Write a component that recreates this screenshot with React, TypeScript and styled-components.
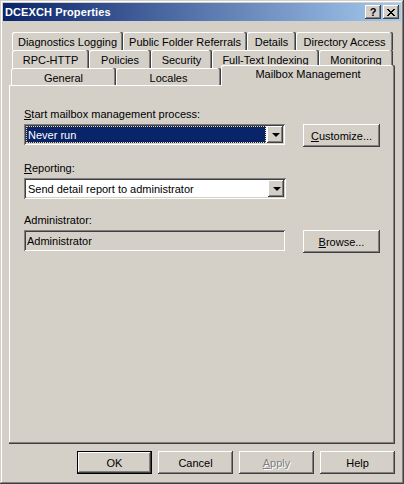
import React from "react";
import styled, { createGlobalStyle, css } from "styled-components";

const face = "#D4D0C8";
const shadow = "#808080";
const darkShadow = "#404040";
const highlight = "#0A246A";

const GlobalStyle = createGlobalStyle`
  html, body {
    margin: 0;
    padding: 0;
    background: ${face};
  }
  body {
    font-family: "Liberation Sans", Arial, sans-serif;
    font-size: 11px;
    color: #000;
  }
  * {
    box-sizing: border-box;
  }
`;

const raised = css`
  box-shadow: inset -1px -1px ${darkShadow}, inset 1px 1px #fff,
    inset -2px -2px ${shadow}, inset 2px 2px ${face};
`;

const sunken = css`
  box-shadow: inset 1px 1px ${shadow}, inset -1px -1px #fff,
    inset 2px 2px ${darkShadow}, inset -2px -2px ${face};
`;

const rowsOfTabs: { label: string; width: number }[][] = [
  [
    { label: "Diagnostics Logging", width: 111 },
    { label: "Public Folder Referrals", width: 124 },
    { label: "Details", width: 49 },
    { label: "Directory Access", width: 97 }
  ],
  [
    { label: "RPC-HTTP", width: 77 },
    { label: "Policies", width: 62 },
    { label: "Security", width: 61 },
    { label: "Full-Text Indexing", width: 107 },
    { label: "Monitoring", width: 74 }
  ],
  [
    { label: "General", width: 105 },
    { label: "Locales", width: 105 },
    { label: "Mailbox Management", width: 174 }
  ]
];

const App: React.FC = () => {
  return (
    <>
      <GlobalStyle />
      <Window>
        <TitleBar>
          <Title>DCEXCH Properties</Title>
          <CaptionButtons>
            <CaptionButton>
              <HelpGlyph>?</HelpGlyph>
            </CaptionButton>
            <CaptionButton>
              <svg width="8" height="7" viewBox="0 0 8 7">
                <path
                  d="M0 0h2v1h1v1h2V1h1V0h2v1H7v1H6v1H5v1h1v1h1v1h1v1H6V6H5V5H3v1H2v1H0V6h1V5h1V4h1V3H2V2H1V1H0z"
                  fill="#000"
                />
              </svg>
            </CaptionButton>
          </CaptionButtons>
        </TitleBar>

        <Body>
          <Tabs>
            {rowsOfTabs.map((row, r) => (
              <TabRow key={r} $indent={r === 2 ? 2 : 3} $height={r === 2 ? 17 : 18}>
                {row.map(tab => (
                  <Tab
                    key={tab.label}
                    $width={tab.width}
                    $selected={tab.label === "Mailbox Management"}
                  >
                    {tab.label}
                  </Tab>
                ))}
              </TabRow>
            ))}
          </Tabs>

          <Panel>
            <Field>
              <Label>
                <Key>S</Key>tart mailbox management process:
              </Label>
              <ControlRow>
                <Combo>
                  <ComboValue $focused>
                    <FocusText>Never run</FocusText>
                  </ComboValue>
                  <DropButton>
                    <Arrow />
                  </DropButton>
                </Combo>
                <Button>
                  <Key>C</Key>ustomize...
                </Button>
              </ControlRow>
            </Field>

            <Field>
              <Label>
                <Key>R</Key>eporting:
              </Label>
              <ControlRow>
                <Combo>
                  <ComboValue>Send detail report to administrator</ComboValue>
                  <DropButton>
                    <Arrow />
                  </DropButton>
                </Combo>
              </ControlRow>
            </Field>

            <Field>
              <Label>Administrator:</Label>
              <ControlRow>
                <TextBox>Administrator</TextBox>
                <Button>
                  <Key>B</Key>rowse...
                </Button>
              </ControlRow>
            </Field>
          </Panel>

          <ButtonBar>
            <Button $default $width={75}>
              OK
            </Button>
            <Button $width={75}>Cancel</Button>
            <Button $width={75} $disabled>
              <Key>A</Key>pply
            </Button>
            <Button $width={75}>Help</Button>
          </ButtonBar>
        </Body>
      </Window>
    </>
  );
};

export default App;

const Window = styled.div`
  width: 404px;
  height: 484px;
  padding: 3px;
  background: ${face};
  display: flex;
  flex-direction: column;
  box-shadow: inset -1px -1px ${darkShadow}, inset 1px 1px ${face},
    inset -2px -2px ${shadow}, inset 2px 2px #fff;
`;

const TitleBar = styled.div`
  height: 18px;
  flex: none;
  display: flex;
  align-items: center;
  justify-content: space-between;
  padding: 0 2px 0 2px;
  background: linear-gradient(to right, ${highlight}, #a6caf0);
`;

const Title = styled.span`
  color: #fff;
  font-weight: bold;
  font-size: 11px;
  letter-spacing: 0.1px;
`;

const CaptionButtons = styled.div`
  display: flex;
  gap: 2px;
`;

const CaptionButton = styled.div`
  width: 16px;
  height: 14px;
  background: ${face};
  display: flex;
  align-items: center;
  justify-content: center;
  ${raised};
`;

const HelpGlyph = styled.span`
  font-weight: bold;
  font-size: 11px;
  line-height: 11px;
  margin-top: 1px;
`;

const Body = styled.div`
  flex: 1;
  display: flex;
  flex-direction: column;
  padding: 11px 6px 7px 6px;
`;

const Tabs = styled.div`
  display: flex;
  flex-direction: column;
`;

const TabRow = styled.div<{ $indent: number; $height: number }>`
  display: flex;
  height: ${p => p.$height}px;
  padding-left: ${p => p.$indent}px;
`;

const Tab = styled.div<{ $width: number; $selected?: boolean }>`
  width: ${p => p.$width}px;
  flex: none;
  height: 18px;
  display: flex;
  align-items: center;
  justify-content: center;
  background: ${face};
  border-radius: 2px 2px 0 0;
  white-space: nowrap;
  padding-top: 1px;
  box-shadow: inset -1px 0 ${darkShadow}, inset -2px 0 ${shadow},
    inset 1px 1px #fff;
  ${p =>
    p.$selected &&
    css`
      position: relative;
      z-index: 1;
      height: 21px;
      margin-top: -3px;
      padding-top: 0;
      padding-bottom: 4px;
    `}
`;

const Panel = styled.div`
  height: 359px;
  flex: none;
  display: flex;
  flex-direction: column;
  gap: 15px;
  padding: 23px 15px 0 15px;
  background: ${face};
  box-shadow: inset -1px -1px ${darkShadow}, inset -2px -2px ${shadow},
    inset 1px 1px #fff;
`;

const Field = styled.div`
  display: flex;
  flex-direction: column;
  gap: 3px;
`;

const Label = styled.div`
  height: 13px;
  line-height: 13px;
  white-space: nowrap;
`;

const Key = styled.span`
  text-decoration: underline;
`;

const ControlRow = styled.div`
  display: flex;
  align-items: flex-start;
  gap: 18px;
`;

const Combo = styled.div`
  width: 262px;
  height: 21px;
  padding: 2px;
  display: flex;
  background: #fff;
  ${sunken};
`;

const ComboValue = styled.div<{ $focused?: boolean }>`
  flex: 1;
  display: flex;
  align-items: center;
  padding-left: 2px;
  white-space: nowrap;
  ${p =>
    p.$focused &&
    css`
      background: ${highlight};
      color: #fff;
      padding: 0;
      margin-right: 1px;
    `}
`;

const FocusText = styled.span`
  flex: 1;
  align-self: stretch;
  display: flex;
  align-items: center;
  padding-left: 1px;
  border: 1px dotted #f5db95;
`;

const DropButton = styled.div`
  width: 16px;
  flex: none;
  background: ${face};
  display: flex;
  align-items: center;
  justify-content: center;
  ${raised};
`;

const Arrow = styled.span`
  width: 0;
  height: 0;
  border-left: 4px solid transparent;
  border-right: 4px solid transparent;
  border-top: 4px solid #000;
  margin-left: 1px;
`;

const TextBox = styled.div`
  width: 262px;
  height: 21px;
  padding: 0 3px;
  display: flex;
  align-items: center;
  background: ${face};
  ${sunken};
`;

const Button = styled.div<{
  $width?: number;
  $default?: boolean;
  $disabled?: boolean;
}>`
  width: ${p => p.$width ?? 77}px;
  height: 23px;
  flex: none;
  display: flex;
  align-items: center;
  justify-content: center;
  background: ${face};
  white-space: nowrap;
  ${raised};
  ${p =>
    p.$default &&
    css`
      box-shadow: inset 0 0 0 1px #000, inset -2px -2px ${darkShadow},
        inset 2px 2px #fff, inset -3px -3px ${shadow};
    `}
  ${p =>
    p.$disabled &&
    css`
      color: ${shadow};
      text-shadow: 1px 1px #fff;
    `}
`;

const ButtonBar = styled.div`
  display: flex;
  justify-content: flex-end;
  gap: 6px;
  margin-top: 7px;
`;
